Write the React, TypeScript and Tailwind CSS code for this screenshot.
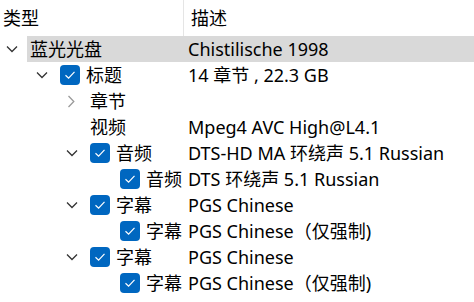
import React from "react";

type Row = {
  level: number;
  label: string;
  desc: string;
  expander?: "down" | "right";
  checkbox?: boolean;
  selected?: boolean;
};

const rows: Row[] = [
  { level: 0, label: "蓝光光盘", desc: "Chistilische 1998", expander: "down", selected: true },
  { level: 1, label: "标题", desc: "14 章节 , 22.3 GB", expander: "down", checkbox: true },
  { level: 2, label: "章节", desc: "", expander: "right" },
  { level: 2, label: "视频", desc: "Mpeg4 AVC High@L4.1" },
  { level: 2, label: "音频", desc: "DTS-HD MA 环绕声 5.1 Russian", expander: "down", checkbox: true },
  { level: 3, label: "音频", desc: "DTS 环绕声 5.1 Russian", checkbox: true },
  { level: 2, label: "字幕", desc: "PGS Chinese", expander: "down", checkbox: true },
  { level: 3, label: "字幕", desc: "PGS Chinese（仅强制)", checkbox: true },
  { level: 2, label: "字幕", desc: "PGS Chinese", expander: "down", checkbox: true },
  { level: 3, label: "字幕", desc: "PGS Chinese（仅强制)", checkbox: true },
];

const indentClass: Record<number, string> = {
  0: "w-[27px]",
  1: "w-[57px]",
  2: "w-[87px]",
  3: "w-[117px]",
};

const firstColClass: Record<number, string> = {
  0: "w-[161px]",
  1: "w-[131px]",
  2: "w-[101px]",
  3: "w-[71px]",
};

const font = {
  fontFamily: '"Segoe UI", "Noto Sans", "Noto Sans CJK SC", sans-serif',
};

function ChevronDown() {
  return (
    <svg width="12" height="8" viewBox="0 0 12 8" className="shrink-0">
      <path d="M1 1.5 L6 6.5 L11 1.5" fill="none" stroke="#333" strokeWidth="1.3" />
    </svg>
  );
}

function ChevronRight() {
  return (
    <svg width="8" height="13" viewBox="0 0 8 13" className="shrink-0">
      <path d="M1.5 1 L6.8 6.5 L1.5 12" fill="none" stroke="#9a9a9a" strokeWidth="1.3" />
    </svg>
  );
}

function Checkbox() {
  return (
    <div className="w-[20px] h-[20px] rounded-[4px] bg-[#0067c0] flex items-center justify-center shrink-0 mr-[6px]">
      <svg width="12" height="10" viewBox="0 0 12 10">
        <path d="M1.5 5.2 L4.6 8.2 L10.5 1.8" fill="none" stroke="#fff" strokeWidth="1.2" />
      </svg>
    </div>
  );
}

export default function App() {
  return (
    <div className="w-[474px] h-[302px] bg-white overflow-hidden text-[18px] text-black" style={font}>
      <div className="flex h-[36px] items-center">
        <div className="w-[184px] h-full flex items-center pl-[3px] border-r border-[#e5e5e5]">类型</div>
        <div className="pl-[7px]">描述</div>
      </div>
      {rows.map((r, i) => (
        <div key={i} className="flex h-[26px] items-center">
          <div className={`${indentClass[r.level]} h-full flex items-center justify-end shrink-0`}>
            <div className="w-[21px] h-full flex items-center pl-[0px]">
              {r.expander === "down" && <ChevronDown />}
              {r.expander === "right" && (
                <div className="pl-[1px] flex items-center">
                  <ChevronRight />
                </div>
              )}
            </div>
          </div>
          <div className={`flex-1 h-full flex items-center ${r.selected ? "bg-[#d9d9d9]" : ""}`}>
            <div className={`${firstColClass[r.level]} h-full flex items-center pl-[3px] shrink-0 whitespace-nowrap`}>
              {r.checkbox && <Checkbox />}
              <span>{r.label}</span>
            </div>
            <div className="whitespace-nowrap">{r.desc}</div>
          </div>
        </div>
      ))}
    </div>
  );
}
